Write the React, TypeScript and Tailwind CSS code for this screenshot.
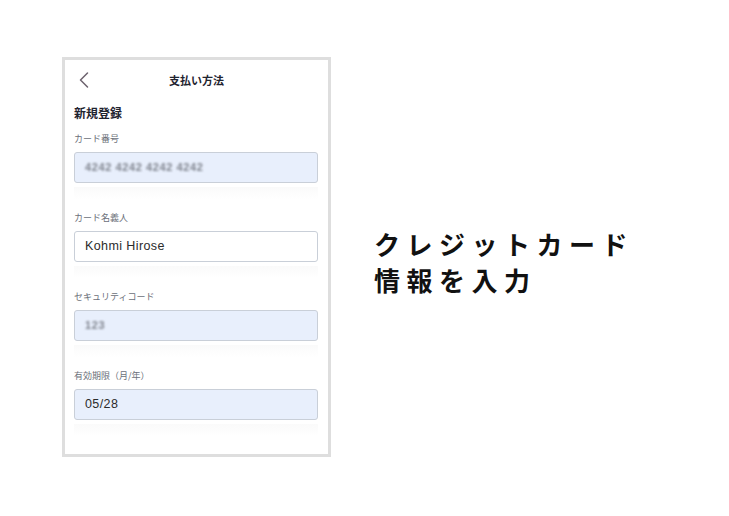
import { ChevronLeft } from "lucide-react";

type Field = {
  label: string;
  value: string;
  masked?: boolean;
  filled?: boolean;
};

const fields: Field[] = [
  { label: "カード番号", value: "4242 4242 4242 4242", masked: true, filled: true },
  { label: "カード名義人", value: "Kohmi Hirose" },
  { label: "セキュリティコード", value: "123", masked: true, filled: true },
  { label: "有効期限（月/年）", value: "05/28", filled: true },
];

function FormField({ field, first }: { field: Field; first: boolean }) {
  return (
    <div className={first ? "mt-[12px]" : "mt-[13px]"}>
      <p className="text-[9px] leading-[12px] text-[#6b7079]">{field.label}</p>
      <div
        className={
          "mt-[7px] h-[31px] rounded-[3px] border border-[#c9cfd8] flex items-center px-[10px] " +
          (field.filled ? "bg-[#e8effc]" : "bg-white")
        }
      >
        {field.masked ? (
          <span className="text-[11px] font-bold tracking-[0.6px] text-[#80858f] blur-[1px] select-none font-['Liberation_Sans',sans-serif]">
            {field.value}
          </span>
        ) : (
          <span className="text-[12.5px] text-[#2b2b2b] tracking-[0.4px] font-['Liberation_Sans',sans-serif]">
            {field.value}
          </span>
        )}
      </div>
      <div className="mt-[4px] h-[12px] bg-gradient-to-b from-[#fafafa] to-white" />
    </div>
  );
}

export default function App() {
  return (
    <main
      className="w-[729px] h-[516px] bg-white flex pl-[62px] pt-[57px]"
      style={{ fontFamily: '"Noto Sans CJK JP", "Noto Sans", sans-serif' }}
    >
      <div className="w-[269px] h-[400px] border-[3px] border-[#dedede] bg-white flex flex-col overflow-hidden">
        <header className="h-[40px] shrink-0 relative flex items-center justify-center">
          <ChevronLeft
            className="absolute left-[5px] top-[6px] text-[#6e6470]"
            size={28}
            strokeWidth={1.3}
          />
          <h1 className="text-[11px] font-bold text-[#1f2430]">支払い方法</h1>
        </header>
        <div className="px-[9px] pr-[10px]">
          <h2 className="mt-[5px] text-[12px] leading-[16px] font-bold text-[#1f2430]">新規登録</h2>
          {fields.map((f, i) => (
            <FormField key={f.label} field={f} first={i === 0} />
          ))}
        </div>
      </div>

      <div className="ml-[43px] mt-[169px] text-[26px] leading-[36px] font-bold tracking-[6.5px] text-[#111]">
        <p>クレジットカード</p>
        <p>情報を入力</p>
      </div>
    </main>
  );
}
